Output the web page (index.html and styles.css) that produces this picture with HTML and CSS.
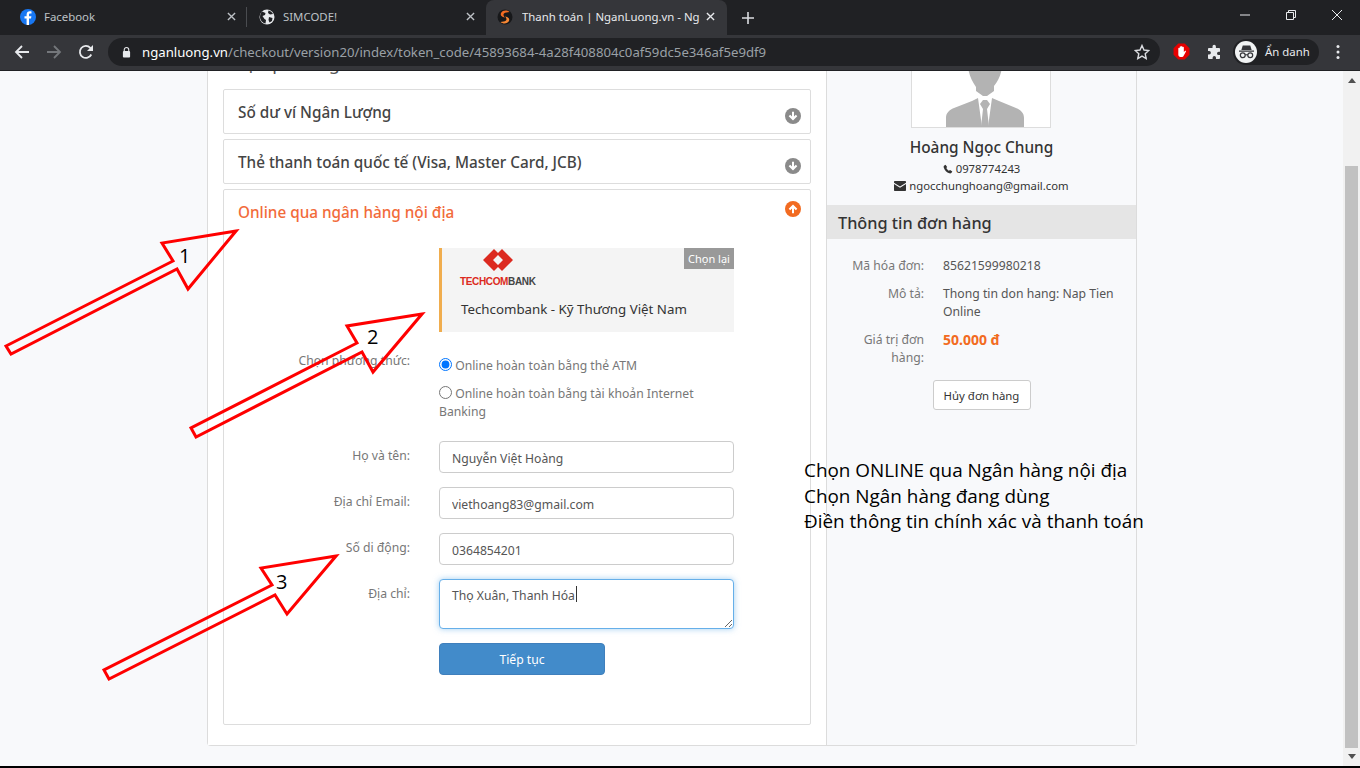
FILE: index.html
```html
<!DOCTYPE html>
<html lang="vi">
<head>
<meta charset="utf-8">
<title>Thanh toán | NganLuong.vn</title>
<link rel="stylesheet" href="styles.css">
</head>
<body>
<div class="app">
  <div class="tabstrip">
    <div class="tab">
      <svg class="fav" viewBox="0 0 16 16"><circle cx="8" cy="8" r="8" fill="#1877f2"/><path d="M9 16V9.6h2l.4-2.4H9V5.8c0-.8.3-1.3 1.3-1.3h1.2V2.400c-.5-.1-1.100-.2-1.800-.2C8 2.200 6.600 3.400 6.600 5.500v1.700H4.500v2.400h2.100V16z" fill="#fff"/></svg>
      <span class="tab-title">Facebook</span>
      <svg class="tab-x" viewBox="0 0 10 10"><path d="M1 1l8 8M9 1l-8 8" stroke="#bdc1c6" stroke-width="1.500"/></svg>
    </div>
    <div class="tab-sep"></div>
    <div class="tab">
      <svg class="fav" viewBox="0 0 16 16"><circle cx="8" cy="8" r="7.500" fill="#e8eaed"/><path d="M3 2.500L6.500 4 6 6 3.500 7 5.500 10l1.500 1-.5 3.500C3.500 14 1 11 1 8s1-4.500 2-5.500zM9.500 1.500L9 4l2 1.500L14 5c-1-2-2.500-3-4.500-3.500zM10 8l3.500 1-.5 3-2.500 1.500L9.500 11z" fill="#202124"/></svg>
      <span class="tab-title">SIMCODE!</span>
      <svg class="tab-x" viewBox="0 0 10 10"><path d="M1 1l8 8M9 1l-8 8" stroke="#bdc1c6" stroke-width="1.500"/></svg>
    </div>
    <div class="tab tab-active">
      <svg class="fav" viewBox="0 0 16 16"><circle cx="8" cy="8" r="7.500" fill="#17181a"/><path d="M12.500 3C10 .8 5.500 1 4 4c-1 2.500 1 4 4 4.500C6.500 7 6 5.500 7 4.500c1.300-1.200 3.500-1 5.500-1.500z" fill="#f26b21"/><path d="M3.500 13c2.500 2.200 7 2 8.500-1 1-2.500-1-4-4-4.500 1.500 1.500 2 3 1 4-1.300 1.200-3.500 1-5.500 1.500z" fill="#f58634"/></svg>
      <span class="tab-title tab-title-active">Thanh toán | NganLuong.vn - Ng</span>
      <svg class="tab-x" viewBox="0 0 10 10"><path d="M1 1l8 8M9 1l-8 8" stroke="#e8eaed" stroke-width="1.500"/></svg>
    </div>
    <svg class="newtab" viewBox="0 0 12 12"><path d="M6 0v12M0 6h12" stroke="#dadce0" stroke-width="1.600"/></svg>
    <div class="winctl">
      <svg class="win" viewBox="0 0 12 12"><path d="M1 6h10" stroke="#e8eaed" stroke-width="1"/></svg>
      <svg class="win" viewBox="0 0 12 12"><path d="M1.500 3.500h7v7h-7zM3.500 3.500v-2h7v7h-2" fill="none" stroke="#e8eaed" stroke-width="1"/></svg>
      <svg class="win" viewBox="0 0 12 12"><path d="M1 1l10 10M11 1L1 11" stroke="#e8eaed" stroke-width="1"/></svg>
    </div>
  </div>
  <div class="toolbar">
    <svg class="nav" viewBox="0 0 16 16"><path d="M15 8H2M8 2L2 8l6 6" fill="none" stroke="#e8eaed" stroke-width="1.800"/></svg>
    <svg class="nav" viewBox="0 0 16 16"><path d="M1 8h13M8 2l6 6-6 6" fill="none" stroke="#74777b" stroke-width="1.800"/></svg>
    <svg class="nav" viewBox="0 0 16 16"><path d="M13.300 10.500A6 6 0 1 1 12.300 3.800L14.500 6" fill="none" stroke="#e8eaed" stroke-width="1.800"/><path d="M15 1v6H9z" fill="#e8eaed"/></svg>
    <div class="omnibox">
      <svg class="lock" viewBox="0 0 10 12"><path d="M2.500 5V3.500a2.500 2.500 0 0 1 5 0V5" fill="none" stroke="#e8eaed" stroke-width="1.200"/><rect x="1" y="5" width="8" height="7" rx="1" fill="#e8eaed"/></svg>
      <span class="url"><span class="url-host">nganluong.vn</span>/checkout/version20/index/token_code/45893684-4a28f408804c0af59dc5e346af5e9df9</span>
      <svg class="star" viewBox="0 0 16 16"><path d="M8 1.500l2 4.500 4.800.5-3.600 3.200 1 4.800L8 12.100 3.800 14.500l1-4.800L1.200 6.500 6 6z" fill="none" stroke="#dadce0" stroke-width="1.400"/></svg>
    </div>
    <svg class="ext-stop" viewBox="0 0 16 16"><path d="M5 .5h6L15.500 5v6L11 15.500H5L.5 11V5z" fill="#e60000"/><path d="M5 8V5a.7.7 0 0 1 1.300 0V3.500a.7.7 0 0 1 1.300 0v-.300a.7.7 0 0 1 1.300 0v.800a.7.700 0 0 1 1.300 0v4.500l1-1c.7-.5 1.300.1.900.8L9.800 12.500c-.3.400-.7.600-1.200.6H7c-1.200 0-2-.9-2-2z" fill="#fff"/></svg>
    <svg class="ext-puzzle" viewBox="0 0 16 16"><path d="M6.500 2.500a1.700 1.700 0 0 1 3.400 0V4h3.100c.5 0 1 .5 1 1v2.700h-1.300a1.700 1.700 0 0 0 0 3.400H14V14c0 .5-.5 1-1 1H10v-1.300a1.700 1.700 0 0 0-3.400 0V15H3c-.5 0-1-.5-1-1v-3.500h1.200a1.700 1.700 0 0 0 0-3.400H2V5c0-.5.5-1 1-1h3.500z" fill="#e8eaed"/></svg>
    <div class="incognito">
      <span class="incog-face">
        <svg class="incog-icon" viewBox="0 0 18 16"><path d="M5 1.500h8L14.500 6.500h-11zM1 7h16v1.300H1z" fill="#35363a"/><circle cx="5" cy="12" r="2.600" fill="none" stroke="#35363a" stroke-width="1.300"/><circle cx="13" cy="12" r="2.600" fill="none" stroke="#35363a" stroke-width="1.300"/><path d="M7.500 11.500h3" stroke="#35363a" stroke-width="1.200"/></svg>
      </span>
      <span class="incog-text">Ẩn danh</span>
    </div>
    <svg class="menu" viewBox="0 0 4 16"><circle cx="2" cy="2.500" r="1.500" fill="#e8eaed"/><circle cx="2" cy="8" r="1.500" fill="#e8eaed"/><circle cx="2" cy="13.500" r="1.500" fill="#e8eaed"/></svg>
  </div>

  <div class="viewport">
    <div class="page">
      <div class="sheet">
        <div class="main-col">
          <h2 class="main-title">Chọn phương thức thanh toán</h2>
          <div class="pay-card">
            <div class="pay-head">
              <span class="pay-title">Số dư ví Ngân Lượng</span>
              <svg class="circle-icon" viewBox="0 0 16 16"><circle cx="8" cy="8" r="8" fill="#8a8a8a"/><path d="M8 12.500L3.700 8.200l1.500-1.400L7 8.500V3.800h2v4.700l1.800-1.700 1.500 1.400z" fill="#fff"/></svg>
            </div>
          </div>
          <div class="pay-card">
            <div class="pay-head">
              <span class="pay-title">Thẻ thanh toán quốc tế (Visa, Master Card, JCB)</span>
              <svg class="circle-icon" viewBox="0 0 16 16"><circle cx="8" cy="8" r="8" fill="#8a8a8a"/><path d="M8 12.500L3.700 8.200l1.500-1.400L7 8.500V3.800h2v4.700l1.800-1.700 1.500 1.400z" fill="#fff"/></svg>
            </div>
          </div>
          <div class="pay-card pay-open">
            <div class="pay-head pay-head-open">
              <span class="pay-title pay-title-open">Online qua ngân hàng nội địa</span>
              <svg class="circle-icon circle-up" viewBox="0 0 16 16"><circle cx="8" cy="8" r="8" fill="#f26b21"/><path d="M8 3.500l4.300 4.300-1.500 1.400L9 7.500v4.700H7V7.500L5.200 9.200 3.700 7.800z" fill="#fff"/></svg>
            </div>
            <div class="form-grid">
              <div class="bank-box">
                <div class="bank-logo">
                  <svg class="bank-mark" viewBox="0 0 30 22"><path d="M11 0L0 11 11 22 15 18V16L10 11 15 6V4z" fill="#dc2a20"/><path d="M19 0L30 11 19 22 15 18V16L20 11 15 6V4z" fill="#dc2a20"/></svg>
                  <div class="bank-word"><span class="bank-word-red">TECHCOM</span>BANK</div>
                </div>
                <div class="bank-name">Techcombank - Kỹ Thương Việt Nam</div>
                <span class="bank-reset">Chọn lại</span>
              </div>
              <div class="f-label f-label-method">Chọn phương thức:</div>
              <div class="methods">
                <label class="method"><input class="radio" type="radio" name="m" checked> Online hoàn toàn bằng thẻ ATM</label>
                <label class="method"><input class="radio" type="radio" name="m"> Online hoàn toàn bằng tài khoản Internet Banking</label>
              </div>
              <div class="f-label">Họ và tên:</div>
              <input class="f-input" type="text" value="Nguyễn Việt Hoàng">
              <div class="f-label">Địa chỉ Email:</div>
              <input class="f-input" type="text" value="viethoang83@gmail.com">
              <div class="f-label">Số di động:</div>
              <input class="f-input" type="text" value="0364854201">
              <div class="f-label">Địa chỉ:</div>
              <div class="ta-wrap">
                <textarea class="f-area">Thọ Xuân, Thanh Hóa</textarea>
                <span class="caret"></span>
              </div>
              <div class="f-empty"></div>
              <button class="btn-next" type="button">Tiếp tục</button>
            </div>
          </div>
        </div>
        <aside class="side-col">
          <div class="avatar">
            <svg class="avatar-img" viewBox="0 0 138 99"><path d="M57 36c0-14 2-36 17-36 15 0 17 22 17 36 0 10-4 17-8 22v5l-7 5h-4l-7-5v-4c-4-6-8-13-8-23z" transform="translate(-1 0)" fill="#b3b3b3"/><path d="M34 99V90c0-5 3-8 8-10l18-7 6-3 4 29zM112 99V90c0-5-3-8-8-10l-17-7-7-3-4 29z" fill="#b3b3b3"/><path d="M71 72l-3 4 3 5-2 18h8l-2-18 3-5-3-4z" fill="#b3b3b3"/></svg>
          </div>
          <div class="owner-name">Hoàng Ngọc Chung</div>
          <div class="owner-line owner-phone">
            <svg class="mini" viewBox="0 0 12 12"><path d="M3 .8L1.200 2C.6 2.500.700 3.600 1 4.500c.8 2.800 3.600 5.800 6.500 6.700 1 .3 2 .2 2.500-.4l1.200-1.700-2.700-2L7 8C5.800 7.400 4.600 6 4 4.800l1-1.200z" fill="#333"/></svg>
            <span>0978774243</span>
          </div>
          <div class="owner-line owner-mail">
            <svg class="mini-mail" viewBox="0 0 12 10"><path d="M1 0h10c.6 0 1 .4 1 1v.7L6 5.500 0 1.700V1c0-.6.400-1 1-1zM0 3l6 3.800L12 3v6c0 .6-.4 1-1 1H1c-.6 0-1-.4-1-1z" fill="#333"/></svg>
            <span>ngocchunghoang@gmail.com</span>
          </div>
          <h3 class="side-title">Thông tin đơn hàng</h3>
          <dl class="order">
            <dt class="order-k">Mã hóa đơn:</dt><dd class="order-v">85621599980218</dd>
            <dt class="order-k">Mô tả:</dt><dd class="order-v">Thong tin don hang: Nap Tien Online</dd>
            <dt class="order-k">Giá trị đơn hàng:</dt><dd class="order-v order-price">50.000 đ</dd>
          </dl>
          <div class="cancel-row"><button class="btn-cancel" type="button">Hủy đơn hàng</button></div>
        </aside>
      </div>
    </div>
    <div class="scrollbar">
      <svg class="sb-arrow" viewBox="0 0 8 5"><path d="M4 0l4 5H0z" fill="#505050"/></svg>
      <div class="sb-thumb"></div>
      <svg class="sb-arrow" viewBox="0 0 8 5"><path d="M4 5l4-5H0z" fill="#505050"/></svg>
    </div>
  </div>
  <div class="blackbar"></div>

  <svg class="annot" viewBox="0 0 1360 768">
    <g fill="none" stroke="#ff0000" stroke-width="3">
      <path d="M236 231L162 243 173 261 6 346 11 354 177 269 188 289z"/>
      <path d="M422 314L347 326 357 343 191 428 196 437 362 352 373 372z"/>
      <path d="M336 556L261 568 272 585 104 670 109 679 275 595 287 614z"/>
    </g>
  </svg>
  <span class="num num-1">1</span>
  <span class="num num-2">2</span>
  <span class="num num-3">3</span>
  <div class="note">Chọn ONLINE qua Ngân hàng nội địa<br>Chọn Ngân hàng đang dùng<br>Điền thông tin chính xác và thanh toán</div>
</div>
</body>
</html>
```
FILE: styles.css
```css
* { box-sizing: border-box; }
html, body { margin: 0; padding: 0; }
body { font-family: "Noto Sans", "Open Sans", sans-serif; overflow: hidden; background: #000; }
.app { position: relative; width: 1360px; height: 768px; display: flex; flex-direction: column; overflow: hidden; }

/* tab strip */
.tabstrip { height: 35px; flex: none; background: #202124; display: flex; align-items: stretch; padding-left: 8px; }
.tab { width: 239px; display: flex; align-items: center; padding: 0 11px 2px 12px; color: #bdc1c6; }
.tab-sep { width: 1px; height: 20px; margin: 7px 0 0 -1px; background: #4a4c50; }
.tab-active { width: 241px; background: #35363a; border-radius: 8px 8px 0 0; padding-left: 11px; padding-right: 12px; }
.fav { width: 16px; height: 16px; flex: none; }
.tab-title { flex: 1; font-size: 11.4px; margin-left: 8px; white-space: nowrap; overflow: hidden; color: #bdc1c6; }
.tab-title-active { color: #e8eaed; margin-left: 9px; }
.tab-x { width: 9px; height: 9px; flex: none; }
.newtab { width: 12px; height: 12px; align-self: center; margin-left: 15px; }
.winctl { margin-left: auto; display: flex; align-items: center; gap: 34px; padding: 0 17px 6px 0; }
.win { width: 12px; height: 12px; }

/* toolbar */
.toolbar { height: 36px; flex: none; background: #35363a; border-bottom: 1px solid #202124; display: flex; align-items: center; padding: 0 0 2px 14px; }
.nav { width: 16px; height: 16px; margin-right: 16px; flex: none; }
.omnibox { width: 1052px; height: 28px; margin-left: -2px; border-radius: 14px; background: #202124; display: flex; align-items: center; padding: 0 10px 0 14px; flex: none; }
.lock { width: 9px; height: 12px; flex: none; }
.url { font-size: 13.2px; color: #9aa0a6; margin-left: 11px; white-space: nowrap; }
.url-host { color: #fff; }
.star { width: 16px; height: 16px; margin-left: auto; }
.ext-stop { width: 17px; height: 17px; margin-left: 13px; flex: none; }
.ext-puzzle { width: 16px; height: 16px; margin-left: 16px; flex: none; }
.incognito { width: 86px; height: 26px; margin-left: 11px; border-radius: 13px; background: #202124; display: flex; align-items: center; padding-left: 2px; flex: none; }
.incog-face { width: 22px; height: 22px; border-radius: 50%; background: #f1f3f4; display: flex; align-items: center; justify-content: center; flex: none; }
.incog-icon { width: 17px; height: 15px; }
.incog-text { font-size: 11.4px; color: #e8eaed; margin-left: 8px; white-space: nowrap; }
.menu { width: 4px; height: 16px; margin-left: 17px; flex: none; }

/* page */
.viewport { flex: 1; min-height: 0; display: flex; overflow: hidden; background: #f8f9fb; }
.page { flex: 1; min-width: 0; overflow: hidden; }
.sheet { width: 930px; margin: -60px 0 0 207px; height: 735px; border: 1px solid #dcdcdc; border-top: 0; border-radius: 0 0 4px 4px; display: flex; background: #fff; }
.main-col { width: 618px; flex: none; padding: 37px 15px 0; background: #fff; }
.main-title { margin: 0 0 11px; font-size: 18px; line-height: 30px; font-weight: 400; color: #555; white-space: nowrap; height: 30px; }
.pay-card { height: 45px; margin-bottom: 5px; border: 1px solid #dddddd; border-radius: 2px; background: #fff; }
.pay-open { height: 536px; margin-bottom: 0; }
.pay-head { position: relative; height: 43px; display: flex; align-items: center; padding: 0 9px 0 14px; justify-content: space-between; }
.pay-title { font-size: 15.3px; font-weight: 500; color: #444; white-space: nowrap; }
.pay-title-open { color: #f26b3a; }
.circle-icon { width: 16px; height: 16px; flex: none; align-self: flex-end; margin-bottom: 9px; }
.circle-up { align-self: flex-start; margin: 11px 0 0; }

.form-grid { display: grid; grid-template-columns: 186px 295px; column-gap: 29px; padding-top: 15px; font-size: 12.2px; color: #777; align-items: start; }
.bank-box { grid-column: 2; position: relative; height: 84px; background: #f4f4f4; border-left: 3px solid #f0ad4e; padding: 0 0 0 18px; margin-bottom: 20px; }
.bank-logo { display: flex; flex-direction: column; align-items: flex-start; padding-top: 1px; }
.bank-mark { width: 30px; height: 22px; margin-left: 23px; }
.bank-word { font-family: "Liberation Sans", sans-serif; font-size: 10px; font-weight: 700; line-height: 13px; margin-top: 4px; color: #444; letter-spacing: -0.35px; white-space: nowrap; }
.bank-word-red { color: #dc2a20; }
.bank-name { font-size: 13.3px; color: #333; margin: 12px 0 0 1px; line-height: 18px; white-space: nowrap; }
.bank-reset { position: absolute; top: 0; right: 0; width: 50px; height: 21px; line-height: 21px; text-align: center; background: #999; color: #fff; font-size: 11px; }
.f-label { grid-column: 1; text-align: right; line-height: 18px; padding-top: 6px; color: #777; white-space: nowrap; }
.f-label-method { padding-top: 0; }
.methods { grid-column: 2; display: flex; flex-direction: column; gap: 10px; margin-bottom: 20px; padding-top: 5px; }
.method { display: block; line-height: 18px; color: #777; font-size: 12.2px; }
.radio { margin: 0; vertical-align: -1px; width: 13px; height: 13px; }
.f-input { grid-column: 2; width: 295px; height: 32px; margin-bottom: 14px; padding: 2px 12px 0; border: 1px solid #ccc; border-radius: 4px; background: #fff; color: #555; font: inherit; font-size: 12.2px; outline: 0; }
.ta-wrap { grid-column: 2; position: relative; height: 50px; margin-bottom: 14px; }
.f-area { display: block; width: 295px; height: 50px; padding: 7px 12px; border: 1px solid #66afe9; border-radius: 4px; box-shadow: 0 0 6px rgba(102,175,233,.6); color: #555; font: inherit; font-size: 12.2px; line-height: 18px; outline: 0; }
.caret { position: absolute; left: 137px; top: 7px; width: 1px; height: 16px; background: #333; }
.f-empty { grid-column: 1; }
.btn-next { grid-column: 2; width: 166px; height: 32px; border: 1px solid #3f7fbc; border-radius: 4px; background: #428bca; color: #fff; font: inherit; font-size: 12.2px; padding: 0; }

/* sidebar */
.side-col { flex: 1; min-width: 0; background: #f8f9fb; border-left: 1px solid #dcdcdc; padding-top: 17px; display: flex; flex-direction: column; align-items: stretch; }
.avatar { width: 140px; height: 100px; margin-left: 84px; background: #fff; border: 1px solid #ddd; border-top: 0; flex: none; }
.avatar-img { display: block; width: 138px; height: 99px; }
.owner-name { margin-top: 10px; text-align: center; font-size: 15.4px; font-weight: 500; line-height: 20px; color: #333; }
.owner-line { display: flex; align-items: center; justify-content: center; gap: 3px; font-size: 11.3px; line-height: 18px; color: #333; }
.owner-phone { margin-top: 2px; }
.owner-mail { margin-top: -1px; }
.mini { width: 10px; height: 10px; }
.mini-mail { width: 12px; height: 10px; }
.side-title { margin: 10px 0 0; height: 34px; line-height: 36px; padding-left: 11px; background: #e5e5e5; font-size: 16.3px; font-weight: 500; color: #333; }
.order { display: grid; grid-template-columns: 97px 182px; column-gap: 19px; row-gap: 10px; margin: 18px 0 0; font-size: 12.2px; line-height: 18px; }
.order-k { text-align: right; color: #777; padding-left: 20px; }
.order-v { margin: 0; color: #555; }
.order-price { color: #f26b21; font-weight: 700; font-size: 14px; }
.cancel-row { display: flex; justify-content: center; margin-top: 13px; }
.btn-cancel { width: 98px; height: 30px; border: 1px solid #ccc; border-radius: 3px; background: #fff; color: #333; font: inherit; font-size: 11.4px; padding: 0; }

/* scrollbar */
.scrollbar { width: 17px; flex: none; background: #f1f1f1; display: flex; flex-direction: column; align-items: center; padding: 7px 0 7px; }
.sb-arrow { width: 8px; height: 5px; flex: none; }
.sb-thumb { width: 13px; margin: 83px 0 6px; flex: 1; background: #c1c1c1; }
.blackbar { height: 2px; flex: none; background: #000; }

/* annotation layer */
.annot { position: absolute; left: 0; top: 0; width: 1360px; height: 768px; pointer-events: none; }
.num { position: absolute; font-family: "Open Sans", sans-serif; font-size: 20px; line-height: 24px; color: #000; }
.num-1 { left: 179px; top: 244px; }
.num-2 { left: 367px; top: 325px; }
.num-3 { left: 276px; top: 570px; }
.note { position: absolute; left: 804px; top: 458px; font-family: "Open Sans", sans-serif; font-size: 18.9px; line-height: 25.5px; color: #000; white-space: nowrap; }
```
